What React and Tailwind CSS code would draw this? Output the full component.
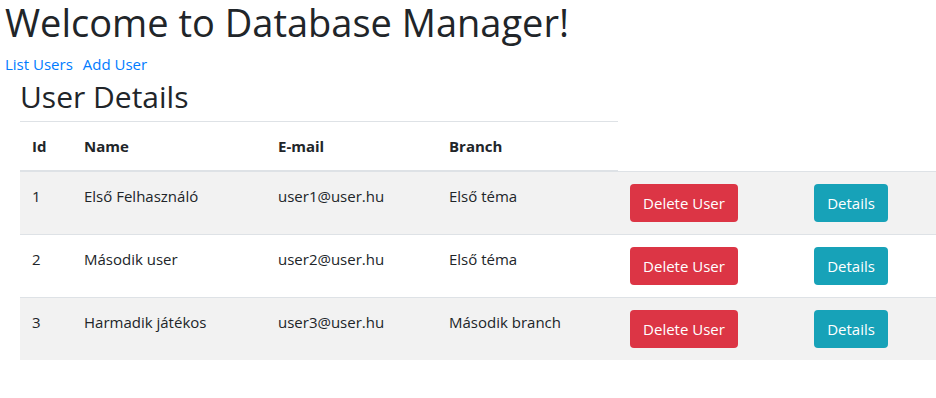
import React from "react";

const users = [
  { id: 1, name: "Első Felhasználó", email: "user1@user.hu", branch: "Első téma" },
  { id: 2, name: "Második user", email: "user2@user.hu", branch: "Első téma" },
  { id: 3, name: "Harmadik játékos", email: "user3@user.hu", branch: "Második branch" },
];

const cell = "p-3 align-top border-t border-[#dee2e6]";
const head = "text-left font-bold p-3 border-t border-b-2 border-[#dee2e6]";

const App = () => {
  return (
    <div className="min-h-screen bg-white text-[#212529] font-['Open_Sans',sans-serif] text-[15px] leading-6">
      <h1 className="pl-[5px] text-[38px] leading-[44px] mb-2">Welcome to Database Manager!</h1>
      <div className="pl-[5px] flex gap-[10px]">
        <a href="#" className="text-[#007bff]">List Users</a>
        <a href="#" className="text-[#007bff]">Add User</a>
      </div>

      <div className="pl-5">
        <h2 className="text-[30px] leading-[38px] mt-[2px] mb-[5px]">User Details</h2>
        <table className="table-fixed border-collapse w-[916px]">
          <colgroup>
            <col className="w-[52px]" />
            <col className="w-[194px]" />
            <col className="w-[171px]" />
            <col className="w-[181px]" />
            <col className="w-[184px]" />
            <col />
          </colgroup>
          <thead>
            <tr>
              <th className={head}>Id</th>
              <th className={head}>Name</th>
              <th className={head}>E-mail</th>
              <th className={head}>Branch</th>
            </tr>
          </thead>
          <tbody>
            {users.map((u, i) => (
              <tr key={u.id} className={i % 2 === 0 ? "bg-[#f2f2f2]" : "bg-white"}>
                <td className={cell}>{u.id}</td>
                <td className={cell}>{u.name}</td>
                <td className={cell}>{u.email}</td>
                <td className={cell}>{u.branch}</td>
                <td className={cell}>
                  <button className="w-[108px] h-[38px] rounded bg-[#dc3545] text-white">Delete User</button>
                </td>
                <td className={cell}>
                  <button className="w-[74px] h-[38px] rounded bg-[#17a2b8] text-white">Details</button>
                </td>
              </tr>
            ))}
          </tbody>
        </table>
      </div>
    </div>
  );
};

export default App;
